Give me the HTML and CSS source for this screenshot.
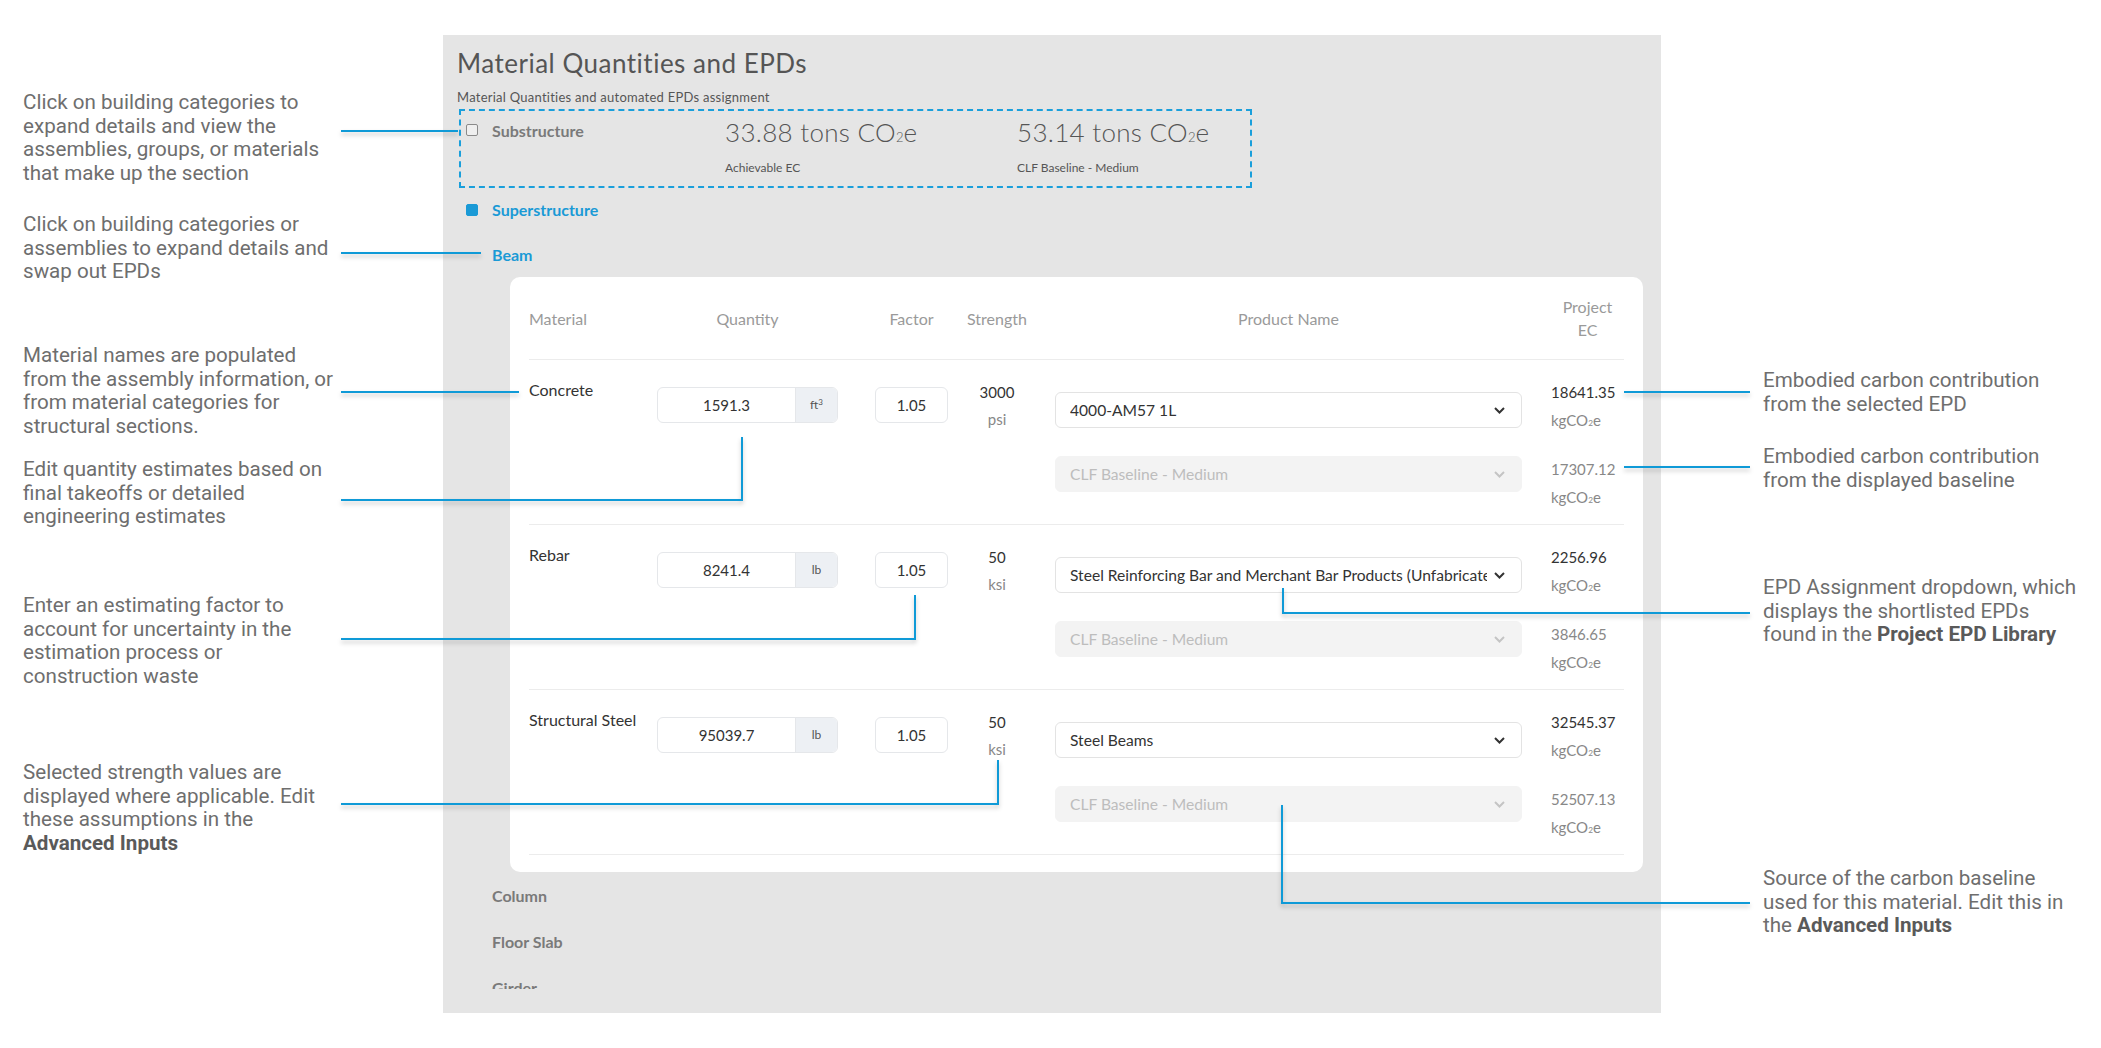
FILE: index.html
```html
<!DOCTYPE html>
<html lang="en">
<head>
<meta charset="utf-8">
<title>Material Quantities and EPDs</title>
<link rel="stylesheet" href="styles.css">
</head>
<body>
<div class="stage">
  <section class="panel">
    <div class="panel-scroll">
      <h1 class="title">Material Quantities and EPDs</h1>
      <p class="subtitle">Material Quantities and automated EPDs assignment</p>

      <div class="sub-box">
        <span class="check"></span>
        <span class="cat-name">Substructure</span>
        <div class="stat stat-1">
          <div class="stat-val">33.88 tons CO<span class="sub">2</span>e</div>
          <div class="stat-label">Achievable EC</div>
        </div>
        <div class="stat">
          <div class="stat-val">53.14 tons CO<span class="sub">2</span>e</div>
          <div class="stat-label">CLF Baseline - Medium</div>
        </div>
      </div>

      <div class="cat">
        <span class="check on"></span>
        <span class="cat-name blue">Superstructure</span>
      </div>

      <div class="assembly blue">Beam</div>

      <div class="card">
        <div class="grid head">
          <div class="h-mat">Material</div>
          <div class="h-qty">Quantity</div>
          <div class="h-fac">Factor</div>
          <div class="h-str">Strength</div>
          <div class="h-prod">Product Name</div>
          <div class="h-ec">Project<br>EC</div>
        </div>

        <div class="grid row">
          <div class="c-mat">Concrete</div>
          <div><div class="qty"><span class="val">1591.3</span><span class="unit">ft<sup>3</sup></span></div></div>
          <div><div class="factor">1.05</div></div>
          <div class="strength"><div class="dark">3000</div><div>psi</div></div>
          <div class="product">
            <div class="select"><span class="sel-text">4000-AM57 1L</span><svg class="chev" width="11" height="7" viewBox="0 0 11 7"><path d="M1 1l4.5 4.5L10 1" fill="none" stroke="#333" stroke-width="2"/></svg></div>
            <div class="select base"><span class="sel-text">CLF Baseline - Medium</span><svg class="chev" width="11" height="7" viewBox="0 0 11 7"><path d="M1 1l4.5 4.5L10 1" fill="none" stroke="#c4c4c4" stroke-width="2"/></svg></div>
          </div>
          <div class="ec">
            <div class="blk"><div class="dark">18641.35</div><div>kgCO<span class="sub">2</span>e</div></div>
            <div class="blk"><div>17307.12</div><div>kgCO<span class="sub">2</span>e</div></div>
          </div>
        </div>

        <div class="grid row">
          <div class="c-mat">Rebar</div>
          <div><div class="qty"><span class="val">8241.4</span><span class="unit">lb</span></div></div>
          <div><div class="factor">1.05</div></div>
          <div class="strength"><div class="dark">50</div><div>ksi</div></div>
          <div class="product">
            <div class="select"><span class="sel-text">Steel Reinforcing Bar and Merchant Bar Products (Unfabricated)</span><svg class="chev" width="11" height="7" viewBox="0 0 11 7"><path d="M1 1l4.5 4.5L10 1" fill="none" stroke="#333" stroke-width="2"/></svg></div>
            <div class="select base"><span class="sel-text">CLF Baseline - Medium</span><svg class="chev" width="11" height="7" viewBox="0 0 11 7"><path d="M1 1l4.5 4.5L10 1" fill="none" stroke="#c4c4c4" stroke-width="2"/></svg></div>
          </div>
          <div class="ec">
            <div class="blk"><div class="dark">2256.96</div><div>kgCO<span class="sub">2</span>e</div></div>
            <div class="blk"><div>3846.65</div><div>kgCO<span class="sub">2</span>e</div></div>
          </div>
        </div>

        <div class="grid row">
          <div class="c-mat">Structural Steel</div>
          <div><div class="qty"><span class="val">95039.7</span><span class="unit">lb</span></div></div>
          <div><div class="factor">1.05</div></div>
          <div class="strength"><div class="dark">50</div><div>ksi</div></div>
          <div class="product">
            <div class="select"><span class="sel-text">Steel Beams</span><svg class="chev" width="11" height="7" viewBox="0 0 11 7"><path d="M1 1l4.5 4.5L10 1" fill="none" stroke="#333" stroke-width="2"/></svg></div>
            <div class="select base"><span class="sel-text">CLF Baseline - Medium</span><svg class="chev" width="11" height="7" viewBox="0 0 11 7"><path d="M1 1l4.5 4.5L10 1" fill="none" stroke="#c4c4c4" stroke-width="2"/></svg></div>
          </div>
          <div class="ec">
            <div class="blk"><div class="dark">32545.37</div><div>kgCO<span class="sub">2</span>e</div></div>
            <div class="blk"><div>52507.13</div><div>kgCO<span class="sub">2</span>e</div></div>
          </div>
        </div>
      </div>

      <div class="assembly first">Column</div>
      <div class="assembly">Floor Slab</div>
      <div class="assembly">Girder</div>
    </div>
  </section>

  <!-- callout notes -->
  <p class="note n1">Click on building categories to<br>expand details and view the<br>assemblies, groups, or materials<br>that make up the section</p>
  <p class="note n2">Click on building categories or<br>assemblies to expand details and<br>swap out EPDs</p>
  <p class="note n3">Material names are populated<br>from the assembly information, or<br>from material categories for<br>structural sections.</p>
  <p class="note n4">Edit quantity estimates based on<br>final takeoffs or detailed<br>engineering estimates</p>
  <p class="note n5">Enter an estimating factor to<br>account for uncertainty in the<br>estimation process or<br>construction waste</p>
  <p class="note n6">Selected strength values are<br>displayed where applicable. Edit<br>these assumptions in the<br><b>Advanced Inputs</b></p>
  <p class="note ra">Embodied carbon contribution<br>from the selected EPD</p>
  <p class="note rb">Embodied carbon contribution<br>from the displayed baseline</p>
  <p class="note rc">EPD Assignment dropdown, which<br>displays the shortlisted EPDs<br>found in the <b>Project EPD Library</b></p>
  <p class="note rd">Source of the carbon baseline<br>used for this material. Edit this in<br>the <b>Advanced Inputs</b></p>

  <!-- callout lines -->
  <span class="ln l1"></span>
  <span class="ln l2"></span>
  <span class="ln l3"></span>
  <span class="elbow e4"></span>
  <span class="elbow e5"></span>
  <span class="elbow e6"></span>
  <span class="ln la"></span>
  <span class="ln lb"></span>
  <span class="elbow right ec1"></span>
  <span class="elbow right ed"></span>
</div>
</body>
</html>
```
FILE: styles.css
```css
* { box-sizing: border-box; }
html, body { margin: 0; padding: 0; }
body {
  width: 2101px;
  height: 1048px;
  overflow: hidden;
  background: #fff;
  font-family: Lato, "Open Sans", sans-serif;
}
.stage {
  position: relative;
  width: 2101px;
  height: 1048px;
  padding: 35px 0 0 443px;
}

/* ---------- panel ---------- */
.panel {
  width: 1218px;
  height: 978px;
  background: #e5e5e5;
  padding: 0 0 24px 14px;
}
.panel-scroll {
  height: 954px;
  overflow: hidden;
  padding-top: 13px;
}
.title {
  margin: 0;
  font-size: 26px;
  line-height: 30px;
  font-weight: 400;
  letter-spacing: 0.5px;
  color: #555;
}
.subtitle {
  margin: 11px 0 0;
  font-size: 13px;
  line-height: 16px;
  letter-spacing: 0.25px;
  color: #555;
}
.sub-box {
  margin: 4px 0 0 2px;
  width: 793px;
  height: 79px;
  border: 2px dashed #1a9fdb;
  display: flex;
  align-items: flex-start;
  padding: 6px 0 0 5px;
}
.check {
  flex: none;
  width: 12px;
  height: 12px;
  border: 1px solid #8a8a8a;
  border-radius: 2px;
  background: #efefef;
}
.sub-box .check { margin-top: 7px; }
.check.on { background: #1a9ad6; border-color: #1a9ad6; }
.cat-name {
  margin-left: 14px;
  font-size: 16px;
  font-weight: 700;
  line-height: 20px;
  color: #7a7a7a;
}
.sub-box .cat-name { width: 233px; margin-top: 4px; flex: none; }
.blue { color: #1a9ad6 !important; }
.stat-1 { width: 292px; }
.stat-val {
  font-size: 26px;
  line-height: 30px;
  font-weight: 300;
  letter-spacing: 0.3px;
  color: #555;
  white-space: nowrap;
}
.stat-val .sub { font-size: 13px; letter-spacing: 0; }
.stat-label {
  margin-top: 8px;
  font-size: 12px;
  line-height: 16px;
  color: #555;
}
.sub { font-size: 55%; }
.cat {
  display: flex;
  align-items: center;
  margin-top: 12px;
  padding-left: 9px;
  height: 20px;
}
.assembly {
  margin-top: 25px;
  padding-left: 35px;
  font-size: 16px;
  font-weight: 700;
  line-height: 20px;
  color: #7a7a7a;
}
.assembly.first { margin-top: 14px; }
.assembly + .assembly { margin-top: 26px; }

/* ---------- card ---------- */
.card {
  margin: 12px 0 0 53px;
  width: 1133px;
  background: #fff;
  border-radius: 10px;
  padding: 0 19px 17px;
  font-size: 15px;
  color: #888;
}
.grid {
  display: grid;
  grid-template-columns: 128px 218px 73px 107px 496px 73px;
  border-bottom: 1px solid #ececec;
}
.head {
  height: 83px;
  align-items: center;
  color: #9a9a9a;
  font-size: 16px;
  line-height: 23px;
}
.h-qty { width: 181px; text-align: center; }
.h-fac { text-align: center; }
.h-str { width: 98px; text-align: center; }
.h-prod { width: 467px; text-align: center; }
.h-ec { text-align: center; }
.row {
  height: 165px;
  align-items: start;
}
.dark { color: #333; }
.c-mat {
  padding-top: 20px;
  line-height: 20px;
  font-size: 16px;
  color: #333;
}
.qty {
  margin-top: 27px;
  width: 181px;
  height: 36px;
  display: flex;
  border: 1px solid #e5e7ea;
  border-radius: 6px;
  overflow: hidden;
  color: #333;
}
.qty .val { flex: 1; text-align: center; line-height: 34px; }
.qty .unit {
  width: 42px;
  background: #edf0f4;
  border-left: 1px solid #e5e7ea;
  text-align: center;
  font-size: 12px;
  line-height: 34px;
  color: #555;
}
.qty .unit sup { font-size: 8px; vertical-align: 4px; line-height: 0; }
.factor {
  margin-top: 27px;
  width: 73px;
  height: 36px;
  border: 1px solid #e5e7ea;
  border-radius: 6px;
  text-align: center;
  line-height: 34px;
  color: #333;
}
.strength {
  padding-top: 19px;
  width: 98px;
  text-align: center;
  line-height: 27px;
}
.product {
  padding-top: 32px;
  display: flex;
  flex-direction: column;
  gap: 28px;
}
.select {
  position: relative;
  width: 467px;
  height: 36px;
  border: 1px solid #e3e3e3;
  border-radius: 6px;
  padding: 0 34px 0 14px;
  font-size: 15.6px;
  line-height: 34px;
  color: #333;
}
.sel-text {
  display: block;
  white-space: nowrap;
  overflow: hidden;
}
.select.base {
  background: #f3f3f3;
  border-color: #f3f3f3;
  color: #bdbdbd;
}
.chev {
  position: absolute;
  right: 16px;
  top: 14px;
}
.ec {
  padding-top: 18px;
  line-height: 28px;
  white-space: nowrap;
}
.ec .blk + .blk { margin-top: 18px; }

/* ---------- callouts ---------- */
.note {
  position: absolute;
  margin: 0;
  font-family: Roboto, "Liberation Sans", sans-serif;
  font-size: 20.6px;
  line-height: 23.5px;
  color: #6e6e6e;
  white-space: nowrap;
}
.note b { font-weight: 700; color: #5a5a5a; }
.n1 { left: 23px; top: 91px; }
.n2 { left: 23px; top: 213px; }
.n3 { left: 23px; top: 344px; }
.n4 { left: 23px; top: 458px; }
.n5 { left: 23px; top: 594px; }
.n6 { left: 23px; top: 761px; }
.ra { left: 1763px; top: 369px; }
.rb { left: 1763px; top: 445px; }
.rc { left: 1763px; top: 576px; }
.rd { left: 1763px; top: 867px; }

.ln, .elbow {
  position: absolute;
  filter: drop-shadow(0 3px 2px rgba(0, 0, 0, 0.22));
}
.ln { height: 2px; background: #0f9ad7; }
.elbow {
  border: 0 solid #0f9ad7;
  border-right-width: 2px;
  border-bottom-width: 2px;
}
.elbow.right {
  border-right-width: 0;
  border-left-width: 2px;
}
.l1 { left: 341px; top: 130px; width: 117px; }
.l2 { left: 341px; top: 252px; width: 140px; }
.l3 { left: 341px; top: 391px; width: 178px; }
.e4 { left: 341px; top: 437px; width: 402px; height: 64px; }
.e5 { left: 341px; top: 595px; width: 575px; height: 45px; }
.e6 { left: 341px; top: 760px; width: 658px; height: 45px; }
.la { left: 1624px; top: 391px; width: 126px; }
.lb { left: 1624px; top: 466px; width: 126px; }
.ec1 { left: 1282px; top: 588px; width: 468px; height: 26px; }
.ed { left: 1281px; top: 805px; width: 469px; height: 99px; }
```
